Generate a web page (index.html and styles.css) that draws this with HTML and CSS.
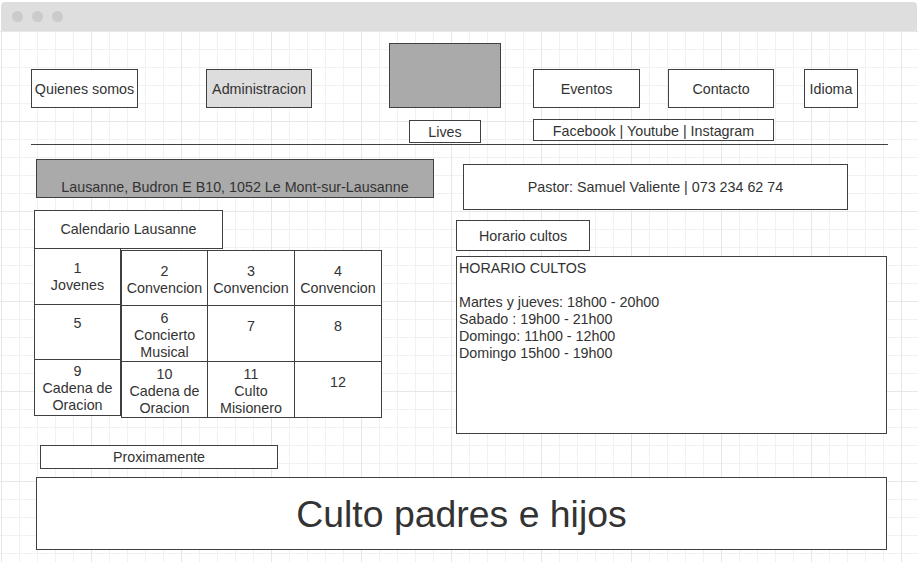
FILE: index.html
```html
<!DOCTYPE html>
<html lang="es">
<head>
<meta charset="utf-8">
<title>Iglesia Lausanne - Wireframe</title>
<link rel="stylesheet" href="styles.css">
</head>
<body>
<div class="window">
  <div class="titlebar">
    <span class="dot"></span><span class="dot"></span><span class="dot"></span>
  </div>
  <div class="canvas">
    <nav class="nav">
      <div class="box nav-quienes">Quienes somos</div>
      <div class="box nav-admin">Administracion</div>
      <div class="box logo"></div>
      <div class="box nav-eventos">Eventos</div>
      <div class="box nav-contacto">Contacto</div>
      <div class="box nav-idioma">Idioma</div>
    </nav>
    <div class="subnav">
      <div class="box lives">Lives</div>
      <div class="box social">Facebook | Youtube | Instagram</div>
    </div>
    <div class="rule"></div>
    <div class="main">
      <div class="col-left">
        <div class="box address"><span class="address-text">Lausanne, Budron E B10, 1052 Le Mont-sur-Lausanne</span></div>
        <div class="box cal-title">Calendario Lausanne</div>
        <div class="calendar">
          <div class="cal-col">
            <div class="cell cell-a"><div>1</div><div>Jovenes</div></div>
            <div class="cell cell-b"><div>5</div><div>&nbsp;</div></div>
            <div class="cell cell-a"><div>9</div><div>Cadena de</div><div>Oracion</div></div>
          </div>
          <div class="cal-grid">
            <div class="cell"><div>2</div><div>Convencion</div></div>
            <div class="cell"><div>3</div><div>Convencion</div></div>
            <div class="cell"><div>4</div><div>Convencion</div></div>
            <div class="cell"><div>6</div><div>Concierto</div><div>Musical</div></div>
            <div class="cell"><div>7</div><div>&nbsp;</div></div>
            <div class="cell"><div>8</div><div>&nbsp;</div></div>
            <div class="cell"><div>10</div><div>Cadena de</div><div>Oracion</div></div>
            <div class="cell"><div>11</div><div>Culto</div><div>Misionero</div></div>
            <div class="cell"><div>12</div><div>&nbsp;</div></div>
          </div>
        </div>
      </div>
      <div class="col-right">
        <div class="box pastor">Pastor: Samuel Valiente | 073 234 62 74</div>
        <div class="box horario-title">Horario cultos</div>
        <div class="box horario-box">
          <div>HORARIO CULTOS</div>
          <div>&nbsp;</div>
          <div>Martes y jueves: 18h00 - 20h00</div>
          <div>Sabado : 19h00 - 21h00</div>
          <div>Domingo: 11h00 - 12h00</div>
          <div>Domingo 15h00 - 19h00</div>
        </div>
      </div>
    </div>
    <div class="box prox">Proximamente</div>
    <div class="box feature">Culto padres e hijos</div>
  </div>
</div>
</body>
</html>
```

FILE: styles.css
```css
* {
  box-sizing: border-box;
}

html, body {
  margin: 0;
  padding: 0;
  background: #ffffff;
}

body {
  font-family: "Liberation Sans", Arial, sans-serif;
  font-size: 14.3px;
  line-height: 17px;
  color: #333333;
}

.window {
  width: 918px;
  height: 562px;
  overflow: hidden;
  display: flex;
  flex-direction: column;
}

.titlebar {
  margin: 2px 1px 0;
  height: 29px;
  background: #dedede;
  border-radius: 4px 4px 0 0;
  display: flex;
  align-items: center;
  padding-left: 11px;
  gap: 9px;
  flex: none;
}

.dot {
  width: 11px;
  height: 11px;
  border-radius: 50%;
  background: #cbcbcb;
}

.canvas {
  flex: 1;
  background-color: #ffffff;
  background-image:
    linear-gradient(to right, #e7e7e7 1px, transparent 1px),
    linear-gradient(to bottom, #e7e7e7 1px, transparent 1px),
    linear-gradient(to right, #f1f1f1 1px, transparent 1px),
    linear-gradient(to bottom, #f1f1f1 1px, transparent 1px);
  background-size: 90px 90px, 90px 90px, 18px 18px, 18px 18px;
  background-position: 1px 0, 0 0, 1px 0, 0 0;
}

.box {
  border: 1px solid #404040;
  background: #ffffff;
  display: flex;
  align-items: center;
  justify-content: center;
  text-align: center;
  white-space: nowrap;
}

/* Navigation */
.nav {
  display: flex;
  align-items: flex-end;
  margin-top: 12px;
  height: 65px;
}

.nav .box {
  height: 39px;
  padding-top: 2px;
}

.nav-quienes { margin-left: 31px; width: 107px; }
.nav-admin { margin-left: 68px; width: 106px; background: #dddddd; }
.nav .logo { margin-left: 77px; width: 112px; height: 65px; background: #aaaaaa; padding-top: 0; }
.nav-eventos { margin-left: 32px; width: 107px; }
.nav-contacto { margin-left: 28px; width: 106px; }
.nav-idioma { margin-left: 30px; width: 54px; }

.subnav {
  display: flex;
  align-items: flex-start;
  margin-top: 11px;
  height: 24px;
}

.lives {
  margin-left: 409px;
  margin-top: 1px;
  width: 72px;
  height: 23px;
  padding-top: 1px;
}

.social {
  margin-left: 52px;
  width: 241px;
  height: 22px;
  padding-top: 2px;
}

.rule {
  margin: 1px 0 0 31px;
  width: 857px;
  height: 1px;
  background: #404040;
}

/* Main area */
.main {
  display: flex;
  align-items: flex-start;
  height: 289px;
}

.col-left {
  margin-left: 34px;
  margin-top: 14px;
  width: 400px;
  display: flex;
  flex-direction: column;
  align-items: flex-start;
}

.address {
  margin-left: 2px;
  width: 398px;
  height: 39px;
  background: #aaaaaa;
}

.address-text {
  display: block;
  padding-top: 17px;
}

.cal-title {
  margin-top: 12px;
  width: 189px;
  height: 39px;
}

.calendar {
  display: flex;
  align-items: flex-start;
  margin-top: -1px;
}

.cal-col {
  width: 87px;
  border-left: 1px solid #404040;
  border-top: 1px solid #404040;
  background: #ffffff;
}

.cell {
  border-right: 1px solid #404040;
  border-bottom: 1px solid #404040;
  background: #ffffff;
  display: flex;
  flex-direction: column;
  align-items: center;
  justify-content: center;
  text-align: center;
  white-space: nowrap;
}

.cal-col .cell { width: 86px; }
.cal-col .cell-a { height: 56px; padding-top: 1px; }
.cal-col .cell-b { height: 55px; }

.cal-grid {
  margin-top: 2px;
  display: grid;
  grid-template-columns: 86px 87px 87px;
  grid-template-rows: 55px 56px 56px;
  border-left: 1px solid #404040;
  border-top: 1px solid #404040;
}

.cal-grid .cell {
  padding-top: 3px;
}

.col-right {
  margin-left: 22px;
  margin-top: 19px;
  display: flex;
  flex-direction: column;
  align-items: flex-start;
}

.pastor {
  margin-left: 7px;
  width: 385px;
  height: 46px;
}

.horario-title {
  margin-top: 10px;
  width: 134px;
  height: 31px;
  padding-top: 2px;
}

.horario-box {
  margin-top: 5px;
  width: 431px;
  height: 178px;
  display: block;
  text-align: left;
  padding: 3px 2px;
}

/* Bottom */
.prox {
  margin-top: 11px;
  margin-left: 40px;
  width: 238px;
  height: 24px;
}

.feature {
  margin-top: 8px;
  margin-left: 36px;
  width: 851px;
  height: 73px;
  font-size: 37.4px;
  line-height: 44px;
}
```
